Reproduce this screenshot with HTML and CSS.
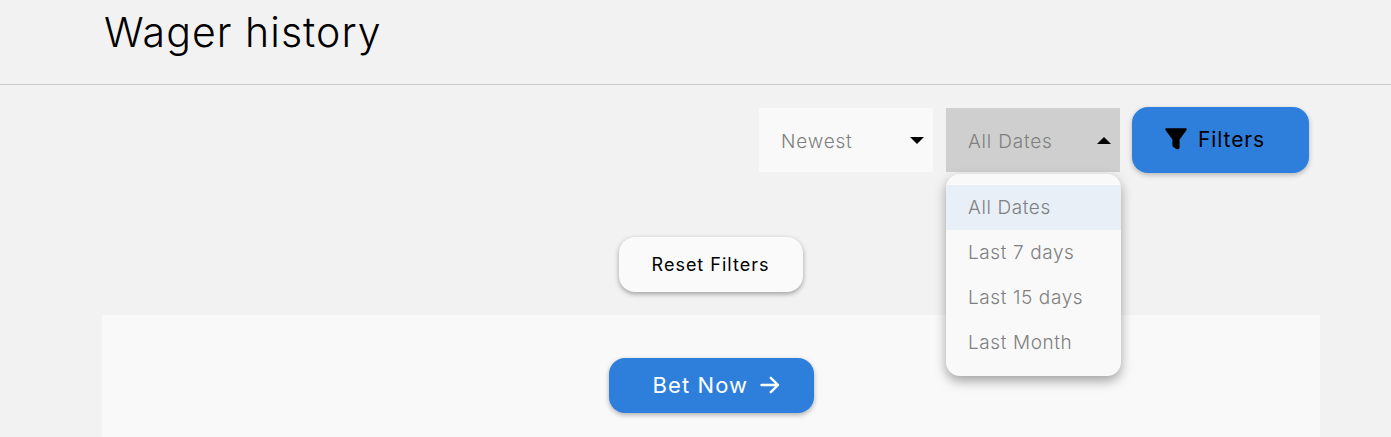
FILE: index.html
```html
<!DOCTYPE html>
<html>
<head>
  <meta charset="UTF-8" />
  <title>Wager history</title>
  <link rel="stylesheet" href="styles.css">
</head>
<body>
<div class="page-header">
  <h1 class="page-title">Wager history</h1>
</div>
<div class="filter-bar">
  <div class="select select-sort">
    <span>Newest</span>
    <span class="caret caret-down"></span>
  </div>
  <div class="select-wrap">
    <div class="select select-open">
      <span>All Dates</span>
      <span class="caret caret-up"></span>
    </div>
    <ul class="select-menu">
      <li class="select-option selected">All Dates</li>
      <li class="select-option">Last 7 days</li>
      <li class="select-option">Last 15 days</li>
      <li class="select-option">Last Month</li>
    </ul>
  </div>
  <a class="btn btn-filters">
    <svg width="22" height="22" viewBox="0 0 22 22"><path d="M0.3 1.4C0.3 0.7 0.8 0.2 1.5 0.2H20.5C21.2 0.2 21.7 0.7 21.7 1.4C21.7 1.7 21.6 2 21.4 2.2L14.6 11.6V19.2C14.6 20.9 12.8 21.9 11.4 21L8.6 19.2C7.9 18.8 7.4 18.1 7.4 17.3V11.6L0.6 2.2C0.4 2 0.3 1.7 0.3 1.4Z" fill="#000"/></svg>
    <span>Filters</span>
  </a>
</div>
<div class="reset-row">
  <a class="btn btn-reset">Reset Filters</a>
</div>
<div class="panel">
  <a class="btn btn-bet">
    <span>Bet Now</span>
    <svg width="20" height="18" viewBox="0 0 20 18"><path d="M1.5 9H18M10.8 1.8L18 9L10.8 16.2" fill="none" stroke="#fff" stroke-width="2.4" stroke-linecap="round" stroke-linejoin="round"/></svg>
  </a>
</div>
</body>
</html>
```

FILE: styles.css
```css
html, body {
  margin: 0;
  height: 437px;
  overflow: hidden;
}

body {
  background-color: #f2f2f2;
  font-family: "Inter", "Liberation Sans", sans-serif;
  color: #000;
}

.page-header {
  height: 84px;
  border-bottom: 1px solid #c9c9c9;
  padding-left: 104px;
}

.page-title {
  margin: 0;
  padding-top: 8px;
  font-size: 41px;
  line-height: 48px;
  font-weight: 300;
  letter-spacing: 1.05px;
}

.filter-bar {
  display: flex;
  justify-content: flex-end;
  align-items: center;
  gap: 12px;
  padding: 22px 82px 0 0;
}

.select-wrap {
  position: relative;
}

.select {
  display: flex;
  justify-content: space-between;
  align-items: center;
  box-sizing: border-box;
  width: 174px;
  height: 64px;
  padding: 2px 9px 0 22px;
  background-color: #f9f9f9;
  color: #808080;
  font-size: 19px;
  font-weight: 300;
  letter-spacing: 0.8px;
}

.select-sort {
  margin-right: 1px;
}

.select-open {
  background-color: #cfcfcf;
}

.caret {
  width: 0;
  height: 0;
  border-left: 7px solid transparent;
  border-right: 7px solid transparent;
}

.caret-down {
  margin-top: -2px;
  border-top: 7px solid #000;
}

.caret-up {
  margin-top: -2px;
  border-bottom: 7px solid #000;
}

.select-menu {
  position: absolute;
  top: 66px;
  left: 0;
  z-index: 5;
  width: 175px;
  margin: 0;
  padding: 11px 0;
  list-style: none;
  box-sizing: border-box;
  background-color: #f9f9f9;
  border-radius: 14px;
  box-shadow: 0 5px 12px rgba(0, 0, 0, 0.35);
}

.select-option {
  height: 45px;
  line-height: 45px;
  padding-left: 22px;
  color: #808080;
  font-size: 19px;
  font-weight: 300;
  letter-spacing: 0.6px;
}

.selected {
  background-color: #e8eff6;
}

.btn {
  display: flex;
  align-items: center;
  box-sizing: border-box;
  border-radius: 16px;
}

.btn-filters {
  width: 177px;
  height: 66px;
  gap: 11px;
  padding: 0 0 2px 33px;
  background-color: #2e7fdc;
  color: #000;
  font-size: 21px;
  font-weight: 400;
  letter-spacing: 0.9px;
  box-shadow: 0 2px 5px rgba(0, 0, 0, 0.25);
}

.reset-row {
  display: flex;
  justify-content: center;
  padding: 64px 0 23px;
  margin-right: -30px;
}

.btn-reset {
  justify-content: center;
  width: 184px;
  height: 55px;
  background-color: #fafafa;
  font-size: 18px;
  font-weight: 400;
  letter-spacing: 1px;
  box-shadow: 0 2px 5px rgba(0, 0, 0, 0.35);
}

.panel {
  display: flex;
  justify-content: center;
  box-sizing: border-box;
  margin: 0 71px 0 102px;
  height: 122px;
  padding-top: 43px;
  background-color: #f9f9f9;
}

.btn-bet {
  width: 205px;
  height: 55px;
  gap: 12px;
  padding: 0 0 2px 44px;
  background-color: #2e7fdc;
  color: #fff;
  font-size: 22px;
  font-weight: 400;
  letter-spacing: 1.1px;
  box-shadow: 0 2px 5px rgba(0, 0, 0, 0.3);
}
```
